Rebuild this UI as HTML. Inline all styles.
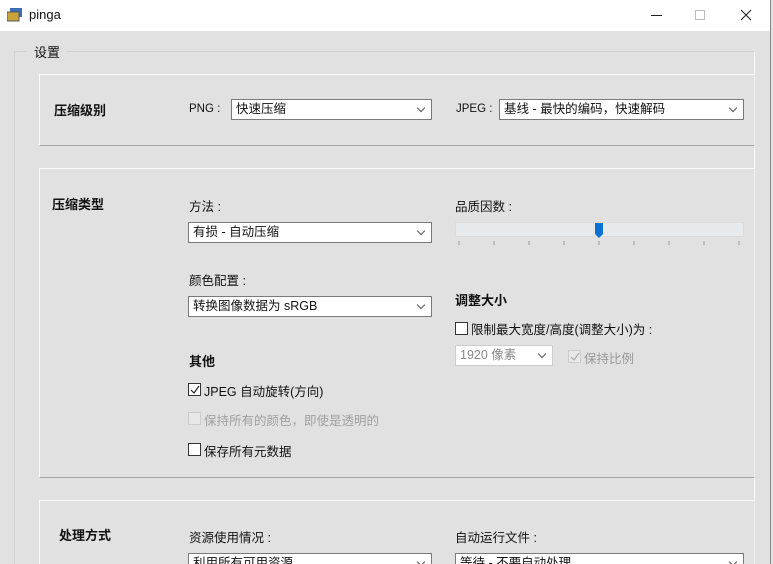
<!DOCTYPE html>
<html style="width:773px;height:564px;overflow:hidden"><head><meta charset="utf-8"><style>
*{box-sizing:border-box;margin:0;padding:0}
body{width:773px;height:564px;overflow:hidden;background:#e1e1e1;font-family:"Liberation Sans","Microsoft YaHei","Noto Sans CJK SC",sans-serif;font-size:12px;color:#111;position:relative}
.abs{position:absolute}
.title{left:0;top:0;width:771px;height:31px;background:#fff}
.win{left:770px;top:0;width:1px;height:564px;background:#888}
.group{left:14px;top:51px;width:741px;height:520px;border:1px solid #d2d2d2;border-right:1px solid #fafafa}
.panel{left:39px;width:716px;border-top:1px solid #fbfbfb;border-left:1px solid #fbfbfb;border-bottom:1px solid #a8a8a8;border-right:1px solid #f0f0f0}
.h{font-weight:bold;font-size:13px}
.sel{height:21px;border:1px solid #7a7a7a;background:#fff;font-size:12.5px;line-height:19px;padding-left:4px}
.sel:after{content:"";position:absolute;right:7px;top:5px;width:5px;height:5px;border-right:1px solid #555;border-bottom:1px solid #555;transform:rotate(45deg)}
.cb{width:13px;height:13px;border:1px solid #333;background:#fff}
.lbl{font-size:12.5px}
</style></head><body>
<div class="abs title"></div>
<div class="abs win"></div>
<svg class="abs" style="left:7px;top:8px" width="16" height="14"><rect x="3" y="0" width="12" height="9" fill="#3a6fb5"/><rect x="0" y="4" width="12" height="9" fill="#c9a43a" stroke="#555"/></svg>
<div class="abs" style="left:29px;top:7px;font-size:13px">pinga</div>
<div class="abs" style="left:651px;top:15px;width:11px;height:1px;background:#222"></div>
<div class="abs" style="left:695px;top:10px;width:10px;height:10px;border:1px solid #bbb"></div>
<svg class="abs" style="left:740px;top:9px" width="12" height="12"><path d="M1 1L11 11M11 1L1 11" stroke="#222" stroke-width="1.1"/></svg>
<div class="abs group"></div>
<div class="abs" style="left:27px;top:42px;background:#e1e1e1;padding:0 7px;font-size:13px">设置</div>

<div class="abs panel" style="top:74px;height:72px"></div>
<div class="abs h" style="left:54px;top:100px">压缩级别</div>
<div class="abs lbl" style="left:189px;top:103px;font-size:11.5px">PNG :</div>
<div class="abs sel" style="left:231px;top:99px;width:201px">快速压缩</div>
<div class="abs lbl" style="left:456px;top:103px;font-size:11.5px">JPEG :</div>
<div class="abs sel" style="left:499px;top:99px;width:245px">基线 - 最快的编码，快速解码</div>

<div class="abs panel" style="top:168px;height:310px"></div>
<div class="abs h" style="left:52px;top:194px">压缩类型</div>
<div class="abs lbl" style="left:189px;top:196px">方法 :</div>
<div class="abs sel" style="left:188px;top:222px;width:244px">有损 - 自动压缩</div>
<div class="abs lbl" style="left:189px;top:270px">颜色配置 :</div>
<div class="abs sel" style="left:188px;top:296px;width:244px">转换图像数据为 sRGB</div>
<div class="abs h" style="left:189px;top:351px">其他</div>
<div class="abs cb" style="left:188px;top:383px"></div>
<svg class="abs" style="left:189px;top:384px" width="12" height="12"><path d="M2 6L5 9L10 2" stroke="#222" fill="none" stroke-width="1.2"/></svg>
<div class="abs lbl" style="left:204px;top:381px">JPEG 自动旋转(方向)</div>
<div class="abs cb" style="left:188px;top:412px;border-color:#ccc;background:#e8e8e8"></div>
<div class="abs lbl" style="left:204px;top:410px;color:#a0a0a0">保持所有的颜色，即使是透明的</div>
<div class="abs cb" style="left:188px;top:443px"></div>
<div class="abs lbl" style="left:204px;top:441px">保存所有元数据</div>

<div class="abs lbl" style="left:455px;top:196px">品质因数 :</div>
<div class="abs" style="left:455px;top:222px;width:289px;height:15px;background:#e7e9eb;border:1px solid #dcdcdc"></div>
<svg class="abs" style="left:594px;top:222px" width="10" height="17"><path d="M1 1H9V12L5 16L1 12Z" fill="#0a72d0"/></svg>
<svg class="abs" style="left:455px;top:241px" width="290" height="5"><g stroke="#999"><path d="M4 0v4M39 0v4M74 0v4M109 0v4M144 0v4M179 0v4M214 0v4M249 0v4M284 0v4"/></g></svg>
<div class="abs h" style="left:455px;top:290px">调整大小</div>
<div class="abs cb" style="left:455px;top:322px"></div>
<div class="abs lbl" style="left:471px;top:319px">限制最大宽度/高度(调整大小)为 :</div>
<div class="abs sel" style="left:455px;top:345px;width:98px;border-color:#ccc;color:#888">1920 像素</div>
<div class="abs cb" style="left:568px;top:350px;border-color:#ccc;background:#e8e8e8"></div>
<svg class="abs" style="left:569px;top:351px" width="12" height="12"><path d="M2 6L5 9L10 2" stroke="#aaa" fill="none" stroke-width="1.2"/></svg>
<div class="abs lbl" style="left:584px;top:348px;color:#999">保持比例</div>

<div class="abs panel" style="top:500px;height:80px"></div>
<div class="abs h" style="left:59px;top:525px">处理方式</div>
<div class="abs lbl" style="left:189px;top:527px">资源使用情况 :</div>
<div class="abs sel" style="left:188px;top:553px;width:244px">利用所有可用资源</div>
<div class="abs lbl" style="left:455px;top:527px">自动运行文件 :</div>
<div class="abs sel" style="left:455px;top:553px;width:289px">等待 - 不要自动处理</div>
</body></html>
